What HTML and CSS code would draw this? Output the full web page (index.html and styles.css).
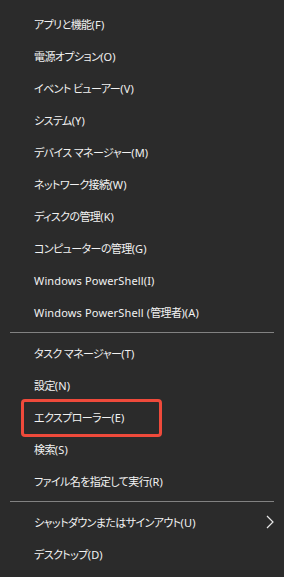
FILE: index.html
```html
<!DOCTYPE html>
<html lang="ja">

<head>
    <meta charset="UTF-8">
    <meta name="viewport" content="width=device-width, initial-scale=1.0">
    <title>クイックリンク メニュー</title>
    <link rel="stylesheet" href="styles.css">
</head>

<body>
    <ul class="menu">
        <li class="item">アプリと機能<span class="en">(F)</span></li>
        <li class="item">電源オプション<span class="en">(O)</span></li>
        <li class="item">イベント ビューアー<span class="en">(V)</span></li>
        <li class="item">システム<span class="en">(Y)</span></li>
        <li class="item">デバイス マネージャー<span class="en">(M)</span></li>
        <li class="item">ネットワーク接続<span class="en">(W)</span></li>
        <li class="item">ディスクの管理<span class="en">(K)</span></li>
        <li class="item">コンピューターの管理<span class="en">(G)</span></li>
        <li class="item"><span class="en">Windows PowerShell(I)</span></li>
        <li class="item"><span class="en">Windows PowerShell (</span>管理者<span class="en">)(A)</span></li>
        <li class="separator"></li>
        <li class="item">タスク マネージャー<span class="en">(T)</span></li>
        <li class="item">設定<span class="en">(N)</span></li>
        <li class="item marked">エクスプローラー<span class="en">(E)</span><span class="mark"></span></li>
        <li class="item">検索<span class="en">(S)</span></li>
        <li class="item">ファイル名を指定して実行<span class="en">(R)</span></li>
        <li class="separator"></li>
        <li class="item submenu">
            <span>シャットダウンまたはサインアウト<span class="en">(U)</span></span>
            <svg class="chevron" width="8" height="14" viewBox="0 0 8 14">
                <polyline points="1,1 7,7 1,13" fill="none" stroke="#e8e8e8" stroke-width="1.2" />
            </svg>
        </li>
        <li class="item">デスクトップ<span class="en">(D)</span></li>
    </ul>
</body>

</html>
```

FILE: styles.css
```css
body {
    margin: 0;
    padding: 0;
    background-color: #2b2b2b;
    font-family: "Segoe UI", "Noto Sans", "Noto Sans CJK JP", sans-serif;
}

.menu {
    list-style-type: none;
    margin: 0;
    padding: 8px 0 7px;
    width: 284px;
    min-height: 577px;
    box-sizing: border-box;
    background-color: #2b2b2b;
}

.item {
    position: relative;
    display: flex;
    align-items: center;
    height: 32px;
    padding-left: 34px;
    padding-right: 10px;
    color: #f2f2f2;
    font-size: 11px;
    letter-spacing: -0.6px;
    font-feature-settings: "palt";
    white-space: pre;
}

/* latin parts keep normal spacing */
.en {
    letter-spacing: 0.15px;
}

.separator {
    height: 1px;
    margin: 4px 10px;
    background-color: #828282;
}

.submenu {
    justify-content: space-between;
}

.chevron {
    display: block;
}

/* red highlight frame around the explorer entry */
.mark {
    position: absolute;
    left: 21px;
    top: -2px;
    width: 141px;
    height: 38px;
    box-sizing: border-box;
    border: 3px solid #ef4a3b;
    border-radius: 4px;
}
```
